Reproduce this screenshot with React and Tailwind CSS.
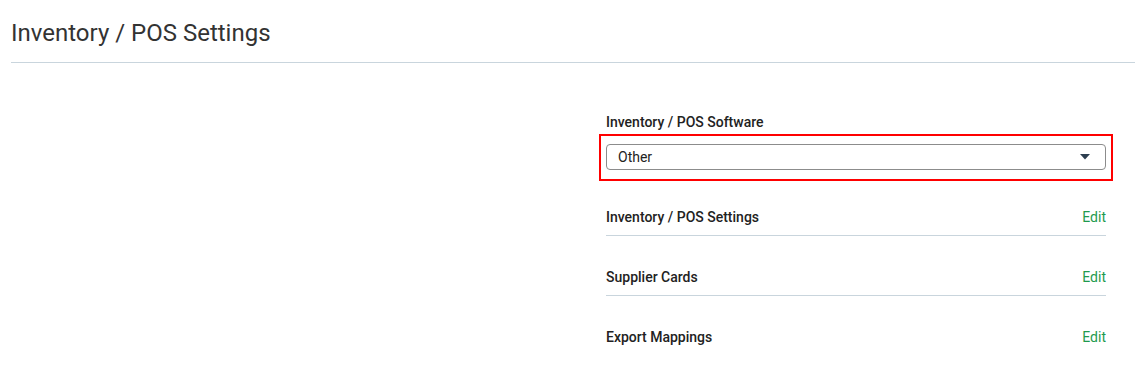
import React from 'react';

const rows = ['Inventory / POS Settings', 'Supplier Cards', 'Export Mappings'];

function SettingRow({ title, last }) {
    return (
        <div className={`flex items-center justify-between pt-[31px] pb-[8px] ${last ? '' : 'border-b border-[#c9d5dd]'}`}>
            <span className="text-[14px] leading-[20px] font-medium text-[#222]">{title}</span>
            <button className="text-[14px] leading-[20px] text-[#1f9a4e]">Edit</button>
        </div>
    );
}

export default function App() {
    return (
        <div className="min-h-[371px] bg-white px-[11px] pt-[19px]" style={{ fontFamily: 'Roboto, "Liberation Sans", sans-serif' }}>
            {/* Header */}
            <h1 className="text-[24px] leading-[28px] font-normal text-[#333] pb-[15px] border-b border-[#c9d5dd] -mr-[11px]">
                Inventory / POS Settings
            </h1>

            <div className="flex">
                <div className="flex-1" />
                <div className="w-[500px] mr-[18px] pt-[51px]">
                    <label className="block text-[14px] leading-[16px] font-medium text-[#222]">Inventory / POS Software</label>

                    {/* highlighted dropdown */}
                    <div className="mt-[4px] -mx-[7px] border-2 border-[#ff0000] px-[5px] pt-[8px] pb-[9px]">
                        <div className="flex items-center justify-between h-[26px] rounded-[4px] border border-[#8c8c8c] pl-[11px] pr-[15px]">
                            <span className="text-[14px] text-[#222]">Other</span>
                            <svg width="10" height="6" viewBox="0 0 10 6">
                                <path d="M0 0 L10 0 L5 5.5 Z" fill="#2d3e50" />
                            </svg>
                        </div>
                    </div>

                    <div className="mt-[-5px]">
                        {rows.map((r, i) => (
                            <SettingRow key={r} title={r} last={i === rows.length - 1} />
                        ))}
                    </div>
                </div>
            </div>
        </div>
    );
}
